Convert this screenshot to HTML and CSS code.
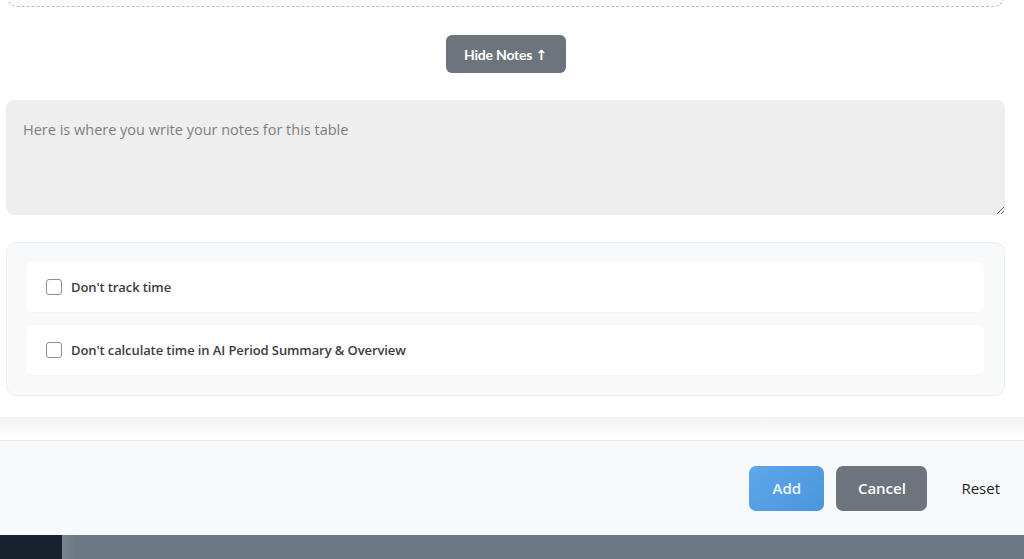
FILE: index.html
```html
<!DOCTYPE html>
<html>
<head>
<meta charset="utf-8">
<link rel="stylesheet" href="styles.css">
</head>
<body>
<div class="page">
  <div class="modal-body">
    <div class="dashed-box"></div>
    <div class="notes-toggle">
      <button class="btn-hide">Hide Notes <span class="arrow">&#8593;</span></button>
    </div>
    <textarea class="notes" placeholder="Here is where you write your notes for this table"></textarea>
    <div class="options">
      <label class="option"><span class="box"></span><span class="opt-text">Don't track time</span></label>
      <label class="option"><span class="box"></span><span class="opt-text">Don't calculate time in AI Period Summary &amp; Overview</span></label>
    </div>
  </div>
  <div class="gap"></div>
  <div class="footer">
    <button class="btn btn-add">Add</button>
    <button class="btn btn-cancel">Cancel</button>
    <button class="btn-reset">Reset</button>
  </div>
  <div class="bottombar">
    <div class="bb-dark"></div>
    <div class="bb-edge"></div>
    <div class="bb-gray"></div>
  </div>
</div>
</body>
</html>
```

FILE: styles.css
```css
* { box-sizing: border-box; }
html, body { margin: 0; padding: 0; }
body {
  width: 1024px;
  height: 559px;
  overflow: hidden;
  background: #ffffff;
  font-family: "Open Sans", "Noto Sans", sans-serif;
}
.page {
  display: flex;
  flex-direction: column;
  height: 559px;
}
.modal-body {
  background: #ffffff;
  padding: 0 19px 0 6px;
  height: 417px;
  display: flex;
  flex-direction: column;
}
.dashed-box {
  margin: -10px 1px 0 1px;
  height: 17px;
  border: 1px dashed #b9bec5;
  border-top: none;
  border-radius: 0 0 10px 10px;
  background: #fafbfc;
}
.notes-toggle {
  display: flex;
  justify-content: center;
  padding-top: 28px;
}
.btn-hide {
  width: 120px;
  height: 38px;
  border: none;
  border-radius: 6px;
  background: #6c757d;
  color: #ffffff;
  font-family: "Lato", sans-serif;
  font-weight: 700;
  font-size: 14px;
  letter-spacing: -0.2px;
  padding: 0;
}
.arrow { font-family: "DejaVu Sans", sans-serif; font-size: 14px; font-weight: 700; }
.notes {
  margin-top: 27px;
  width: 999px;
  height: 115px;
  resize: vertical;
  border: none;
  border-radius: 8px;
  background: #eeeeee;
  padding: 20px 17px;
  font-family: "Open Sans", sans-serif;
  font-size: 14.5px;
  color: #555;
  outline: none;
}
.notes::placeholder { color: #7f7f7f; }
.options {
  margin-top: 27px;
  width: 999px;
  background: #f8f9fa;
  border: 1px solid #eceef0;
  border-radius: 10px;
  padding: 19px 20px 20px 19px;
  display: flex;
  flex-direction: column;
  gap: 13px;
}
.option {
  display: flex;
  align-items: center;
  height: 50px;
  background: #ffffff;
  border-radius: 7px;
  padding-left: 20px;
  gap: 9px;
  box-shadow: 0 1px 1px rgba(0,0,0,0.02);
}
.box {
  width: 16px;
  height: 16px;
  border: 1px solid #8a8f94;
  border-radius: 3px;
  background: #fff;
  flex: none;
}
.opt-text {
  font-size: 13px;
  font-weight: 600;
  color: #3a3d40;
  letter-spacing: -0.1px;
}
.gap {
  height: 24px;
  background: linear-gradient(#f1f2f3, #fbfbfc 60%, #ffffff);
  border-bottom: 1px solid #e6e8ea;
}
.footer {
  flex: 1;
  background: #f8f9fa;
  display: flex;
  justify-content: flex-end;
  align-items: center;
  padding-right: 24px;
  gap: 12px;
}
.btn {
  height: 45px;
  border: none;
  border-radius: 7px;
  color: #ffffff;
  font-family: "Open Sans", sans-serif;
  font-weight: 600;
  font-size: 15px;
  padding: 0;
}
.btn-add {
  width: 75px;
  background: linear-gradient(135deg, #5ea7ea, #4b95dc);
  color: #eef5fc;
}
.btn-cancel {
  width: 91px;
  background: #6c757d;
}
.btn-reset {
  border: none;
  background: transparent;
  font-family: "Open Sans", sans-serif;
  font-size: 15px;
  color: #212529;
  padding: 0 0 0 22px;
  height: 45px;
}
.bottombar {
  height: 24px;
  display: flex;
}
.bb-dark { width: 62px; background: #18222f; }
.bb-edge { width: 14px; background: linear-gradient(90deg, #7a858f, #6c7883); }
.bb-gray { flex: 1; background: #6c7883; }
```
